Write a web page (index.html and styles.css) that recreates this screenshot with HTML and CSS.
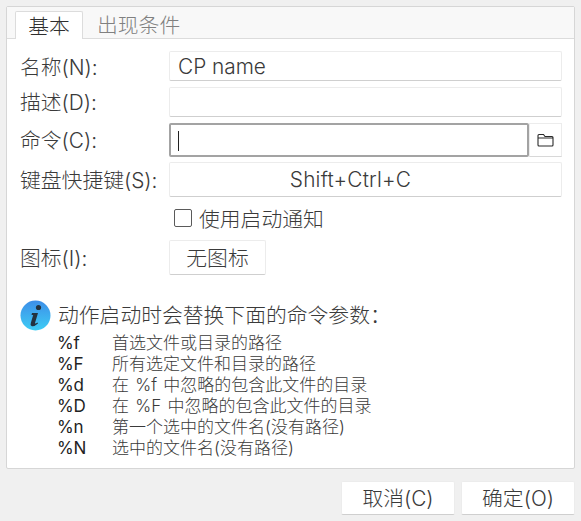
FILE: index.html
```html
<!DOCTYPE html>
<html>
<head>
<title>CP name</title>
<meta charset="UTF-8">
<link rel="stylesheet" href="styles.css">
</head>
<body>
<div class="panel">
	<div class="tabs">
		<div class="tab active">基本</div>
		<div class="tab">出现条件</div>
	</div>
	<div class="page">
		<div class="form">
			<label class="lbl">名称(N):</label>
			<div class="field">CP name</div>
			<label class="lbl lbl-high">描述(D):</label>
			<div class="field"></div>
			<label class="lbl">命令(C):</label>
			<div class="cmd">
				<div class="field focus"><span class="caret"></span></div>
				<div class="browse">
					<svg width="17" height="14" viewBox="0 0 17 14"><path d="M1 12V2.5Q1 1.5 2 1.5H6.5L8 3.5H15Q16 3.500 16 4.500V12Q16 13 15 13H2Q1 13 1 12ZM1 5H16" fill="none" stroke="#2a2a2a" stroke-width="1.1"/></svg>
				</div>
			</div>
			<label class="lbl">键盘快捷键(S):</label>
			<div class="btn wide">Shift+Ctrl+C</div>
			<div class="check">
				<span class="box"></span>使用启动通知
			</div>
			<label class="lbl">图标(I):</label>
			<div class="btn icon-btn">无图标</div>
		</div>
		<div class="info">
			<svg width="31" height="31" viewBox="0 0 31 31">
				<defs><linearGradient id="blue" x1="0" y1="0" x2="0" y2="1"><stop offset="0" stop-color="#3d8ee8"/><stop offset="1" stop-color="#3ecdf5"/></linearGradient></defs>
				<circle cx="15.500" cy="15.500" r="15" fill="url(#blue)"/>
				<circle cx="18.500" cy="7.500" r="2.600" fill="#23323f"/>
				<path d="M12 13H18L15 23Q14.800 24.300 17.500 22.500L18 23.500Q14 27 11.500 26Q10 25.300 10.800 23L13.200 15H11.500Z" fill="#23323f"/>
			</svg>
			<span class="info-text">动作启动时会替换下面的命令参数：</span>
		</div>
		<div class="params">
			<b>%f</b><span>首选文件或目录的路径</span>
			<b>%F</b><span>所有选定文件和目录的路径</span>
			<b>%d</b><span>在 %f 中忽略的包含此文件的目录</span>
			<b>%D</b><span>在 %F 中忽略的包含此文件的目录</span>
			<b>%n</b><span>第一个选中的文件名(没有路径)</span>
			<b>%N</b><span>选中的文件名(没有路径)</span>
		</div>
	</div>
</div>
<div class="actions">
	<div class="btn action">取消(C)</div>
	<div class="btn action">确定(O)</div>
</div>
</body>
</html>
```

FILE: styles.css
```css
*
{
	box-sizing: border-box;
}

body
{
	margin: 0;
	padding: 6px 6px 0 6px;
	width: 581px;
	height: 521px;
	overflow: hidden;
	background-color: #f0f0f0;
	color: #3a3a3a;
	font-family: Inter, "Noto Sans CJK SC", sans-serif;
	font-size: 20.8px;
	font-weight: 300;
}

.panel
{
	height: 463px;
	border: 1px solid #d6d6d6;
	border-radius: 2px;
	background-color: #ffffff;
}

.tabs
{
	display: flex;
	height: 32px;
	padding: 4px 0 0 8px;
	background-color: #f8f8f8;
	border-bottom: 1px solid #dcdcdc;
}

.tab
{
	height: 28px;
	padding: 0 14px;
	line-height: 29px;
	color: #808080;
}

.tab.active
{
	width: 68px;
	height: 28px;
	padding: 0;
	text-align: center;
	color: #2e2e2e;
	background-color: #ffffff;
	border: 1px solid #dcdcdc;
	border-bottom: none;
	border-radius: 2px 2px 0 0;
}

.page
{
	padding: 12px 12px 0 13px;
}

.form
{
	display: grid;
	grid-template-columns: 149px 1fr;
	grid-template-rows: 31px 31px 34px 35px 33px 35px;
	row-gap: 5px;
	align-items: stretch;
}

.lbl
{
	display: flex;
	align-items: center;
	padding-bottom: 2px;
	white-space: nowrap;
}

.lbl-high
{
	padding-bottom: 4px;
}

.field
{
	height: 30px;
	padding-left: 8px;
	line-height: 30px;
	background-color: #ffffff;
	border: 1px solid #ececec;
	border-bottom-color: #cfcfcf;
	border-radius: 2px;
}

.cmd
{
	display: flex;
	height: 34px;
}

.field.focus
{
	flex: 1;
	height: 34px;
	border: 2px solid #a3a3a3;
	padding-top: 6px;
	padding-left: 7px;
}

.caret
{
	display: block;
	width: 1px;
	height: 20px;
	background-color: #222222;
}

.browse
{
	display: flex;
	align-items: center;
	justify-content: center;
	width: 33px;
	border: 1px solid #ececec;
	border-bottom-color: #d8d8d8;
}

.btn
{
	display: flex;
	align-items: center;
	justify-content: center;
	background-color: #ffffff;
	border: 1px solid #ececec;
	border-bottom-color: #cfcfcf;
	border-radius: 2px;
}

.btn.wide
{
	padding-right: 30px;
	letter-spacing: 0.2px;
}

.check
{
	grid-column: 2;
	display: flex;
	align-items: center;
	padding-left: 5px;
	padding-bottom: 2px;
	gap: 7px;
}

.box
{
	width: 18px;
	height: 18px;
	border: 1px solid #5a5a5a;
	border-radius: 2px;
	background-color: #ffffff;
}

.icon-btn
{
	width: 97px;
	padding-bottom: 2px;
}

.info
{
	display: flex;
	align-items: center;
	gap: 7px;
	margin-top: 24px;
}

.info-text
{
	padding-bottom: 2px;
}

.params
{
	display: grid;
	grid-template-columns: 55px 1fr;
	grid-auto-rows: 21px;
	margin: 2px 0 0 37px;
	font-size: 17px;
	line-height: 21px;
	white-space: nowrap;
	word-spacing: 1.5px;
}

.params b
{
	font-weight: 400;
	color: #222222;
	letter-spacing: -0.3px;
}

.actions
{
	display: flex;
	justify-content: flex-end;
	gap: 6px;
	margin-top: 12px;
}

.action
{
	width: 114px;
	height: 34px;
	padding-bottom: 2px;
}
```
